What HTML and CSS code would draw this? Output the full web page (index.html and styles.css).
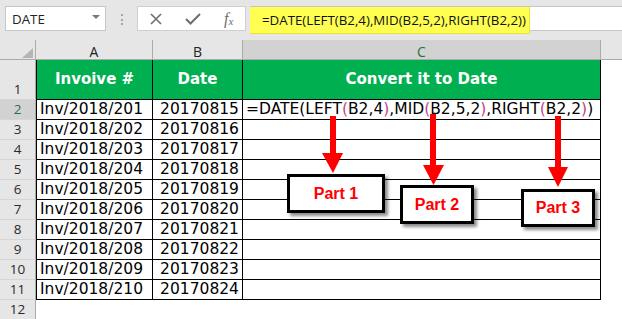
FILE: index.html
```html
<!DOCTYPE html>
<html lang="en">
<head>
    <meta charset="UTF-8">
    <title>DATE formula - Convert it to Date</title>
    <link rel="stylesheet" href="styles.css">
</head>
<body>
    <div class="toolbar">
        <div class="namebox">DATE<span class="caret"></span></div>
        <div class="grip"></div>
        <div class="fx-buttons">
            <svg width="12" height="12" viewBox="0 0 12 12"><path d="M1 1 L11 11 M11 1 L1 11" stroke="#6e6e6e" stroke-width="1.6" fill="none"/></svg>
            <svg width="16" height="12" viewBox="0 0 16 12"><path d="M1 6 L5.5 10.5 L15 1" stroke="#6e6e6e" stroke-width="2" fill="none"/></svg>
            <span class="fx">f<sub>x</sub></span>
        </div>
        <div class="formula-bar">
            <div class="formula-hl">=DATE(LEFT(B2,4),MID(B2,5,2),RIGHT(B2,2))</div>
        </div>
    </div>

    <div class="sheet">
        <div class="corner"></div>
        <div class="col-head">A</div>
        <div class="col-head">B</div>
        <div class="col-head active">C</div>
        <div class="col-head rest"></div>

        <div class="row-head">1</div>
        <div class="cell a head">Invoive #</div>
        <div class="cell head">Date</div>
        <div class="cell head">Convert it to Date</div>
        <div class="blank"></div>

        <div class="row-head active">2</div>
        <div class="cell a">Inv/2018/201</div>
        <div class="cell num">20170815</div>
        <div class="cell formula">=DATE(LEFT<span class="p">(</span>B2,4<span class="p">)</span>,MID<span class="p">(</span>B2,5,2<span class="p">)</span>,RIGHT<span class="p">(</span>B2,2<span class="p">)</span>)</div>
        <div class="blank"></div>

        <div class="row-head">3</div>
        <div class="cell a">Inv/2018/202</div>
        <div class="cell num">20170816</div>
        <div class="cell"></div>
        <div class="blank"></div>

        <div class="row-head">4</div>
        <div class="cell a">Inv/2018/203</div>
        <div class="cell num">20170817</div>
        <div class="cell"></div>
        <div class="blank"></div>

        <div class="row-head">5</div>
        <div class="cell a">Inv/2018/204</div>
        <div class="cell num">20170818</div>
        <div class="cell"></div>
        <div class="blank"></div>

        <div class="row-head">6</div>
        <div class="cell a">Inv/2018/205</div>
        <div class="cell num">20170819</div>
        <div class="cell"></div>
        <div class="blank"></div>

        <div class="row-head">7</div>
        <div class="cell a">Inv/2018/206</div>
        <div class="cell num">20170820</div>
        <div class="cell"></div>
        <div class="blank"></div>

        <div class="row-head">8</div>
        <div class="cell a">Inv/2018/207</div>
        <div class="cell num">20170821</div>
        <div class="cell"></div>
        <div class="blank"></div>

        <div class="row-head">9</div>
        <div class="cell a">Inv/2018/208</div>
        <div class="cell num">20170822</div>
        <div class="cell"></div>
        <div class="blank"></div>

        <div class="row-head">10</div>
        <div class="cell a">Inv/2018/209</div>
        <div class="cell num">20170823</div>
        <div class="cell"></div>
        <div class="blank"></div>

        <div class="row-head">11</div>
        <div class="cell a">Inv/2018/210</div>
        <div class="cell num">20170824</div>
        <div class="cell"></div>
        <div class="blank"></div>

        <div class="row-head">12</div>
        <div class="blank wide"></div>

        <!-- annotation layer -->
        <svg class="arrows" width="622" height="279" viewBox="0 0 622 279">
            <polygon points="330,76 336,76 336,113 343,113 333,133 322,113 330,113" fill="#ff0000"/>
            <polygon points="430,74 436,74 436,125 444,125 433.5,145 423,125 430,125" fill="#ff0000"/>
            <polygon points="555,76 561,76 561,127 568,127 558,147 548,127 555,127" fill="#ff0000"/>
        </svg>
        <div class="callout part1">Part 1</div>
        <div class="callout part2">Part 2</div>
        <div class="callout part3">Part 3</div>
    </div>
</body>
</html>
```

FILE: styles.css
```css
:root {
    --chrome: #e6e6e6;
    --chrome-line: #ababab;
    --selected: #d2d2d2;
    --excel-green: #217346;
    --header-green: #00b050;
    --paren: #c0458f;
}

* {
    box-sizing: border-box;
}

body {
    margin: 0;
    width: 622px;
    height: 319px;
    overflow: hidden;
    background: #fff;
    font-family: "DejaVu Sans", Verdana, sans-serif;
    color: #000;
}

/* formula bar strip */
.toolbar {
    display: flex;
    align-items: flex-start;
    height: 40px;
    padding: 6px 0 0 5px;
    background: var(--chrome);
    font-family: "Open Sans", sans-serif;
    font-size: 13.3px;
}

.namebox {
    display: flex;
    align-items: center;
    width: 101px;
    height: 25px;
    padding-left: 6px;
    background: #fff;
    border: 1px solid #c6c6c6;
    color: #222;
}

.caret {
    margin: 0 5px 3px auto;
    border-left: 4px solid transparent;
    border-right: 4px solid transparent;
    border-top: 4px solid #7a7a7a;
}

.grip {
    width: 2px;
    height: 11px;
    margin: 8px 0 0 15px;
    border-left: 2px dotted #a6a6a6;
}

.fx-buttons {
    display: flex;
    align-items: center;
    justify-content: space-around;
    width: 109px;
    height: 25px;
    margin-left: 14px;
    background: #fff;
    border: 1px solid #d0d0d0;
}

.fx {
    font-family: "Liberation Serif", serif;
    font-style: italic;
    font-size: 16px;
    color: #6e6e6e;
    line-height: 1;
}

.fx sub {
    font-size: 11px;
    vertical-align: -1px;
}

.formula-bar {
    flex: 1;
    height: 25px;
    margin-left: 4px;
    background: #fff;
    border-top: 1px solid #c6c6c6;
    border-bottom: 1px solid #c6c6c6;
}

.formula-hl {
    width: 280px;
    height: 27px;
    padding-left: 12px;
    line-height: 26px;
    background: #ffff52;
    border-right: 1px solid #e4e43c;
    border-bottom: 1px solid #e4e43c;
    color: #111;
    white-space: nowrap;
}

/* worksheet grid */
.sheet {
    position: relative;
    display: grid;
    grid-template-columns: 36px 117px 90px 358px 1fr;
    grid-template-rows: 20px 40px repeat(11, 20px);
}

.corner {
    display: flex;
    align-items: flex-end;
    justify-content: flex-end;
    padding: 0 2px 1px 0;
    background: var(--chrome);
    border-right: 1px solid var(--chrome-line);
    border-bottom: 1px solid var(--chrome-line);
}

.corner::after {
    content: "";
    border-left: 11px solid transparent;
    border-bottom: 10px solid #b5b5b5;
}

.col-head {
    padding-top: 2px;
    line-height: 19px;
    text-align: center;
    font-family: "Open Sans", sans-serif;
    font-size: 14px;
    color: #222;
    background: var(--chrome);
    border-right: 1px solid var(--chrome-line);
    border-bottom: 1px solid var(--chrome-line);
    overflow: hidden;
}

.col-head.active {
    background: var(--selected);
    color: var(--excel-green);
}

.col-head.rest {
    border-right: none;
}

.row-head {
    display: flex;
    align-items: flex-end;
    justify-content: center;
    padding-bottom: 1px;
    line-height: 17px;
    font-family: "Open Sans", sans-serif;
    font-size: 13.5px;
    color: #2b2b2b;
    background: var(--chrome);
    border-right: 1px solid var(--chrome-line);
    border-bottom: 1px solid #d6d6d6;
}

.row-head.active {
    background: var(--selected);
    color: var(--excel-green);
}

.cell {
    padding: 0 3px;
    line-height: 19px;
    font-size: 15.5px;
    white-space: nowrap;
    border-right: 1px solid #000;
    border-bottom: 1px solid #000;
}

.cell.a {
    border-left: 1px solid #000;
}

.cell.num {
    text-align: right;
}

.cell.head {
    display: flex;
    align-items: center;
    justify-content: center;
    background: var(--header-green);
    color: #fff;
    font-weight: bold;
    font-size: 15px;
}

.cell.formula {
    overflow: visible;
}

.p {
    color: var(--paren);
}

.blank.wide {
    grid-column: span 4;
}

/* red arrows and "Part" callouts drawn over the grid */
.arrows {
    position: absolute;
    top: 0;
    left: 0;
    pointer-events: none;
}

.callout {
    position: absolute;
    display: flex;
    align-items: center;
    justify-content: center;
    background: #fff;
    border: 3px solid #000;
    box-shadow: 3px 3px 3px rgba(0, 0, 0, 0.45);
    color: #ff0000;
    font-family: "Liberation Sans", Arial, sans-serif;
    font-weight: bold;
    font-size: 16px;
}

.part1 {
    left: 287px;
    top: 134px;
    width: 98px;
    height: 39px;
}

.part2 {
    left: 400px;
    top: 145px;
    width: 74px;
    height: 39px;
}

.part3 {
    left: 521px;
    top: 149px;
    width: 74px;
    height: 38px;
}
```
